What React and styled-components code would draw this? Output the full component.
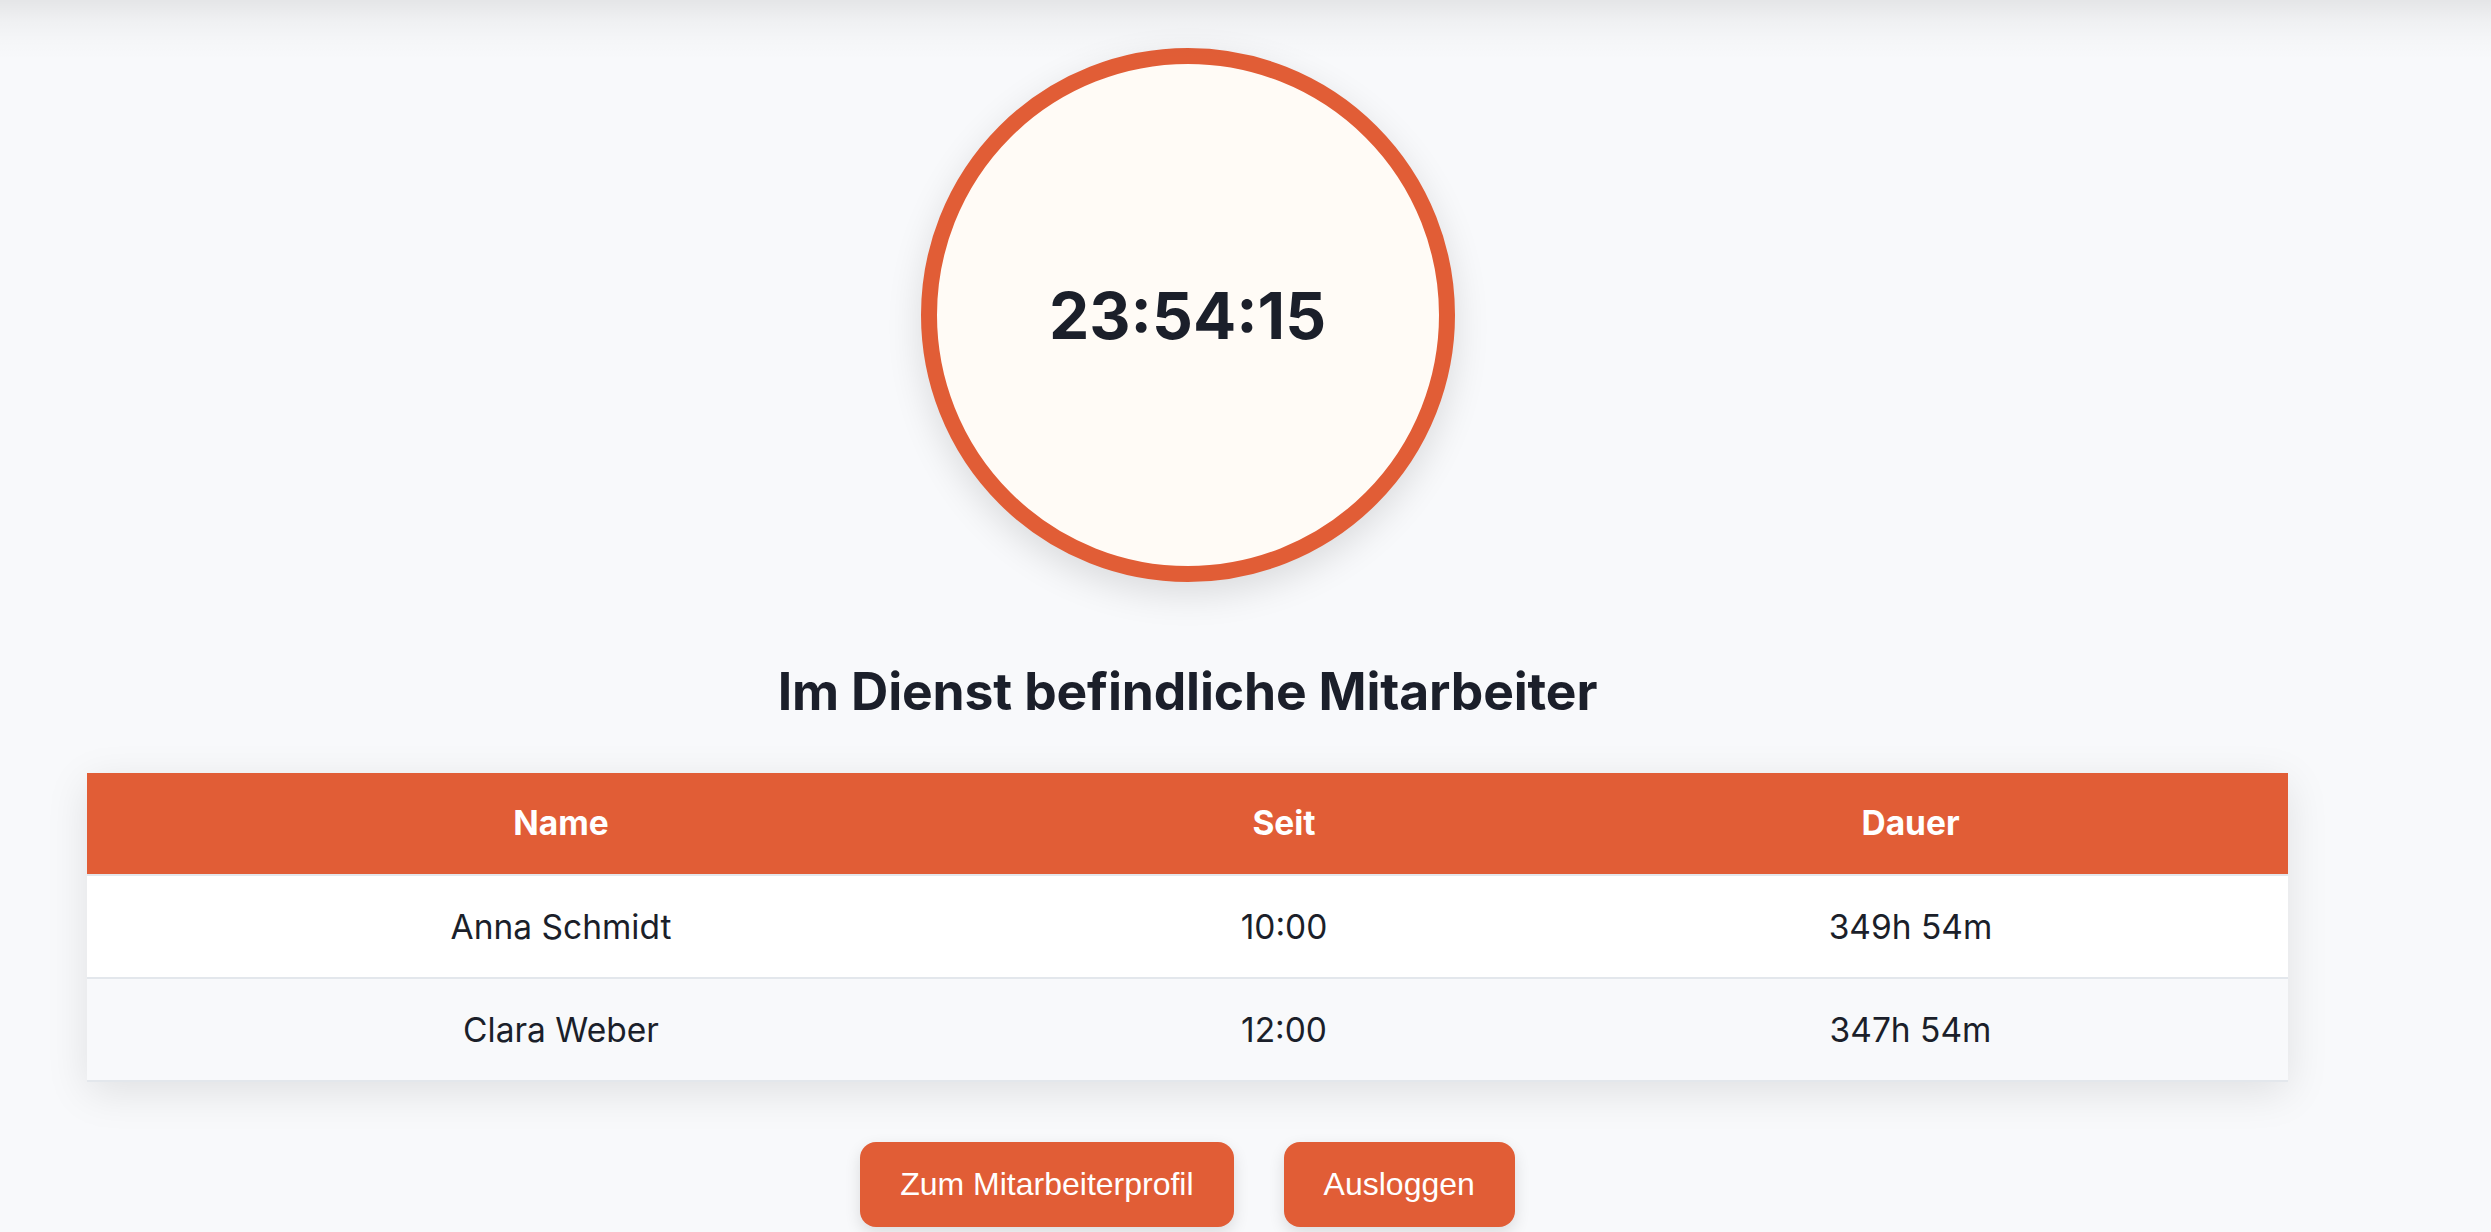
import React from "react";
import styled, { createGlobalStyle } from "styled-components";

const GlobalStyle = createGlobalStyle`
  html, body { margin: 0; padding: 0; }
  body {
    background: #f8f9fb;
    font-family: Inter, "Noto Sans", sans-serif;
    color: #1b1f2a;
  }
`;

const Page = styled.div`
  min-height: 1232px;
  display: flex;
  flex-direction: column;
  align-items: stretch;
  padding: 0 203px 0 87px;
  box-sizing: border-box;
  position: relative;
`;

const TopShade = styled.div`
  position: absolute;
  left: 0;
  right: 0;
  top: 0;
  height: 60px;
  background: linear-gradient(
    rgba(0, 0, 0, 0.08),
    rgba(0, 0, 0, 0.035) 35%,
    rgba(0, 0, 0, 0.01) 70%,
    rgba(0, 0, 0, 0)
  );
  pointer-events: none;
`;

const ClockSection = styled.section`
  display: flex;
  justify-content: center;
  padding-top: 48px;
`;

const ClockFace = styled.div`
  width: 534px;
  height: 534px;
  box-sizing: border-box;
  border-radius: 50%;
  border: 16px solid #e15d36;
  background: #fffbf6;
  box-shadow: 0 12px 36px rgba(0, 0, 0, 0.12);
  display: flex;
  align-items: center;
  justify-content: center;
`;

const Time = styled.div`
  font-size: 64px;
  font-weight: 700;
  letter-spacing: 0;
  color: #1b1f2a;
`;

const Heading = styled.h2`
  margin: 80px 0 53px;
  text-align: center;
  font-size: 51.6px;
  line-height: 58px;
  font-weight: 700;
  letter-spacing: -0.15px;
  color: #1b1f2a;
`;

const Table = styled.table`
  width: 100%;
  border-collapse: collapse;
  table-layout: fixed;
  background: #ffffff;
  box-shadow: 0 10px 40px rgba(0, 0, 0, 0.1);
`;

const HeadCell = styled.th`
  background: #e15d36;
  color: #ffffff;
  font-size: 33.5px;
  font-weight: 700;
  line-height: 40px;
  padding: 30px 16px 31px;
  text-align: center;
  border-bottom: 2px solid #e3e7ec;
`;

const Row = styled.tr`
  background: ${(p) => (p.$alt ? "#f8f9fb" : "#ffffff")};
  border-bottom: 2px solid #e3e7ec;
`;

const Cell = styled.td`
  font-size: 33.5px;
  font-weight: 400;
  line-height: 40px;
  padding: 31px 16px 30px;
  text-align: center;
  color: #1b1f2a;
`;

const Actions = styled.div`
  display: flex;
  justify-content: center;
  gap: 50px;
  margin-top: 60px;
`;

const Button = styled.button`
  font-family: "Liberation Sans", Arial, sans-serif;
  font-size: 32px;
  line-height: 37px;
  color: #ffffff;
  background: #e15d36;
  border: none;
  border-radius: 16px;
  padding: 24px 40px;
  box-shadow: 0 6px 16px rgba(0, 0, 0, 0.12);
  cursor: pointer;
`;

const staff = [
  { name: "Anna Schmidt", since: "10:00", duration: "349h 54m" },
  { name: "Clara Weber", since: "12:00", duration: "347h 54m" },
];

export default function App() {
  return (
    <>
      <GlobalStyle />
      <Page>
        <TopShade />
        <ClockSection>
          <ClockFace>
            <Time>23:54:15</Time>
          </ClockFace>
        </ClockSection>
        <Heading>Im Dienst befindliche Mitarbeiter</Heading>
        <Table>
          <colgroup>
            <col style={{ width: "43.07%" }} />
            <col style={{ width: "22.63%" }} />
            <col style={{ width: "34.3%" }} />
          </colgroup>
          <thead>
            <tr>
              <HeadCell>Name</HeadCell>
              <HeadCell>Seit</HeadCell>
              <HeadCell>Dauer</HeadCell>
            </tr>
          </thead>
          <tbody>
            {staff.map((s, i) => (
              <Row key={s.name} $alt={i % 2 === 1}>
                <Cell>{s.name}</Cell>
                <Cell>{s.since}</Cell>
                <Cell>{s.duration}</Cell>
              </Row>
            ))}
          </tbody>
        </Table>
        <Actions>
          <Button>Zum Mitarbeiterprofil</Button>
          <Button>Ausloggen</Button>
        </Actions>
      </Page>
    </>
  );
}
